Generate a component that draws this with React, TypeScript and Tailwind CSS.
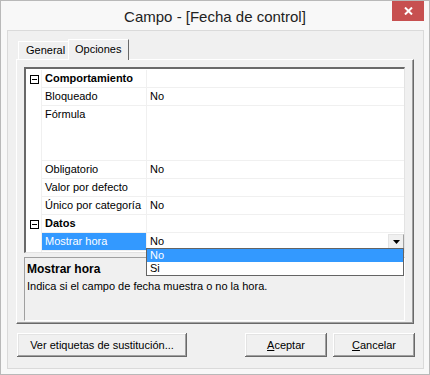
import React from "react";

const btn =
  "h-[24px] bg-[#f0f0f0] text-[11px] text-black flex items-center justify-center shadow-[inset_-1px_-1px_#696969,inset_1px_1px_#ffffff,inset_-2px_-2px_#a0a0a0,inset_2px_2px_#e3e3e3]";

function Minus() {
  return (
    <div className="w-[9px] h-[9px] border border-black bg-white flex items-center justify-center">
      <div className="w-[5px] h-[1px] bg-black" />
    </div>
  );
}

function CatRow({ label }: { label: string }) {
  return (
    <div className="flex h-[18px]">
      <div className="w-[16px] flex items-center justify-start pl-[4px] border-r border-[#f0f0f0]">
        <Minus />
      </div>
      <div className="w-[105px] border-r border-b border-[#f0f0f0] pl-[3px] font-bold text-[11px] leading-[17px]">
        {label}
      </div>
      <div className="flex-1 border-b border-[#f0f0f0]" />
    </div>
  );
}

function PropRow({
  label,
  value,
  h = "h-[18px]",
  selected = false,
  children,
}: {
  label: string;
  value?: string;
  h?: string;
  selected?: boolean;
  children?: React.ReactNode;
}) {
  return (
    <div className={`flex ${h}`}>
      <div className="w-[16px] border-r border-[#f0f0f0]" />
      <div
        className={`w-[105px] border-r border-b border-[#f0f0f0] pl-[3px] text-[11px] leading-[16px] ${
          selected ? "bg-[#3399ff] text-white" : "text-black"
        }`}
      >
        {label}
      </div>
      <div className="flex-1 border-b border-[#f0f0f0] pl-[3px] text-[11px] leading-[16px] relative flex">
        <span className="flex-1">{value}</span>
        {children}
      </div>
    </div>
  );
}

export default function App() {
  return (
    <div className="w-[430px] h-[375px] bg-[#f8f8f8] border border-[#b9b9b9] relative font-['Liberation_Sans',Arial,sans-serif] text-black overflow-hidden">
      {/* title bar */}
      <div className="h-[29px] flex items-center justify-center">
        <span className="text-[15px] text-[#222] leading-none mt-[1px]">Campo - [Fecha de control]</span>
      </div>
      <div className="absolute top-[-1px] right-[5px] w-[32px] h-[21px] bg-[#c75050] flex items-center justify-center">
        <svg width="9" height="8" viewBox="0 0 9 8">
          <path d="M1 0.5 L8 7.5 M8 0.5 L1 7.5" stroke="#fff" strokeWidth="2" />
        </svg>
      </div>

      {/* client area */}
      <div className="ml-[6px] w-[417px] h-[339px] border border-[#dadada] bg-[#f0f0f0] pl-[8px] pt-[8px]">
        {/* tabs */}
        <div className="flex items-end h-[20px] pl-[2px] relative z-10">
          <div className="w-[50px] h-[18px] border-t border-l border-[#ffffff] bg-[#f0f0f0] text-[11px] pl-[7px] leading-[17px]">
            General
          </div>
          <div className="w-[61px] h-[21px] mb-[-1px] border-t border-l border-[#ffffff] border-r border-r-[#696969] bg-[#f0f0f0] text-[11px] pl-[6px] leading-[18px]">
            Opciones
          </div>
        </div>
        {/* panel */}
        <div className="w-[398px] h-[265px] border-t border-l border-white border-r border-b border-r-[#696969] border-b-[#696969] shadow-[inset_-1px_-1px_#a0a0a0] pl-[7px] pt-[7px] flex flex-col">
          {/* property grid */}
          <div className="w-[381px] h-[186px] bg-white border-t-2 border-l-2 border-t-[#696969] border-l-[#696969] border-r border-b border-r-[#e3e3e3] border-b-[#e3e3e3] flex flex-col relative">
            <div className="h-[1px]" />
            <CatRow label="Comportamiento" />
            <PropRow label="Bloqueado" value="No" />
            <PropRow label="Fórmula" h="h-[55px]" />
            <PropRow label="Obligatorio" value="No" />
            <PropRow label="Valor por defecto" />
            <PropRow label="Único por categoría" value="No" />
            <CatRow label="Datos" />
            <PropRow label="Mostrar hora" value="No" selected>
              <div className="w-[16px] h-[15px] mt-[1px] bg-[#f0f0f0] border-t border-l border-[#e3e3e3] border-r border-b border-r-[#a0a0a0] border-b-[#a0a0a0] flex items-center justify-center">
                <svg width="7" height="4" viewBox="0 0 7 4">
                  <path d="M0 0 H7 L3.5 4 Z" fill="#000" />
                </svg>
              </div>
            </PropRow>
            <div className="flex-1 flex">
              <div className="w-[16px] border-r border-[#f0f0f0]" />
            </div>
            {/* dropdown list */}
            <div className="absolute left-[120px] top-[179px] w-[258px] h-[28px] bg-white border border-[#646464] z-20 text-[11px]">
              <div className="h-[13px] bg-[#3399ff] text-white pl-[3px] leading-[13px]">No</div>
              <div className="h-[13px] pl-[3px] leading-[13px]">Si</div>
            </div>
          </div>
          {/* description */}
          <div className="mt-[4px] w-[381px] h-[64px] border-t border-l border-[#a0a0a0] border-r border-b border-r-white border-b-white pl-[2px] pt-[3px]">
            <div className="font-bold text-[12px] leading-[16px]">Mostrar hora</div>
            <div className="text-[11px] leading-[14px] mt-[2px]">Indica si el campo de fecha muestra o no la hora.</div>
          </div>
        </div>
        {/* buttons */}
        <div className="flex mt-[9px] pl-[1px]">
          <div className={`${btn} w-[170px]`}>Ver etiquetas de sustitución...</div>
          <div className="flex-1" />
          <div className={`${btn} w-[82px]`}>
            <span>
              <span className="underline">A</span>ceptar
            </span>
          </div>
          <div className={`${btn} w-[82px] ml-[6px] mr-[8px]`}>
            <span>
              <span className="underline">C</span>ancelar
            </span>
          </div>
        </div>
      </div>
    </div>
  );
}
